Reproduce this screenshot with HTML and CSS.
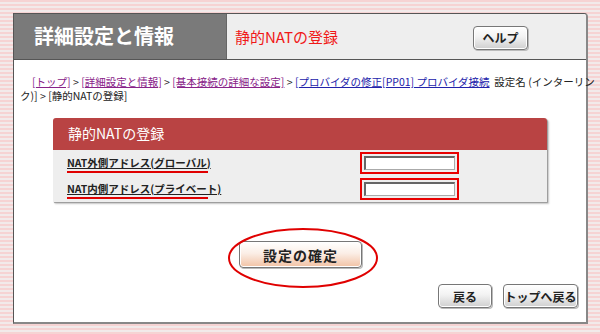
FILE: index.html
```html
<!DOCTYPE html>
<html>
<head lang="ja">
    <meta charset="UTF-8">
    <title>静的NATの登録</title>
    <link rel="stylesheet" href="styles.css">
</head>
<body>
<div class="panel">
    <div class="head">
        <div class="head_title">詳細設定と情報</div>
        <div class="head_sub">静的NATの登録</div>
        <a class="btn btn_help" href="#help">ヘルプ</a>
    </div>
    <div class="crumbs">
        <div class="line first">
            <a class="visited" href="#top">[トップ]</a> &gt;
            <a class="visited" href="#detail">[詳細設定と情報]</a> &gt;
            <a class="visited" href="#basic">[基本接続の詳細な設定]</a> &gt;
            <a href="#pp01">[プロバイダの修正[PP01] プロバイダ接続</a>&nbsp; 設定名 (インターリン
        </div>
        <div class="line">ク)] &gt; [静的NATの登録]</div>
    </div>
    <div class="form_box">
        <div class="form_title">静的NATの登録</div>
        <div class="form_row">
            <span class="label">NAT外側アドレス(グローバル)</span>
            <span class="mark"><input type="text" class="field"></span>
        </div>
        <div class="form_row">
            <span class="label">NAT内側アドレス(プライベート)</span>
            <span class="mark"><input type="text" class="field"></span>
        </div>
    </div>
    <div class="confirm">
        <a class="btn btn_confirm" href="#ok">設定の確定</a>
        <svg class="ring" width="152" height="62" viewBox="0 0 152 62">
            <ellipse cx="76" cy="31" rx="74" ry="29" fill="none" stroke="#e00000" stroke-width="2"/>
        </svg>
    </div>
    <div class="foot">
        <a class="btn btn_back" href="#back">戻る</a>
        <a class="btn btn_top" href="#top">トップへ戻る</a>
    </div>
</div>
</body>
</html>
```

FILE: styles.css
```css
html, body {
    margin: 0;
    padding: 0;
}
body {
    width: 600px;
    height: 334px;
    overflow: hidden;
    background: repeating-linear-gradient(to bottom, #f6d3d3 0px, #f6d3d3 2px, #f2eaea 2px, #f2eaea 4px);
    font-family: "Noto Sans CJK JP", "Noto Sans", sans-serif;
    color: #222;
}
a {
    text-decoration: none;
}
.panel {
    box-sizing: border-box;
    margin: 13px 0 0 13px;
    width: 575px;
    height: 311px;
    background: #fff;
    border: 1px solid #555;
    border-right: 2px solid #888;
    border-bottom: 2px solid #888;
    border-top-right-radius: 4px;
    display: flex;
    flex-direction: column;
}
.head {
    display: flex;
    align-items: center;
    height: 45px;
    background: #eeeeee;
    border-bottom: 1px solid #555;
    border-top-right-radius: 3px;
}
.head_title {
    width: 192px;
    height: 45px;
    line-height: 44px;
    padding-left: 20px;
    background: #7a7a7a;
    border-right: 1px solid #666;
    color: #fff;
    font-size: 20px;
    font-weight: bold;
}
.head_sub {
    padding-left: 8px;
    color: #f01818;
    font-size: 15px;
}
.btn {
    box-sizing: border-box;
    display: flex;
    align-items: center;
    justify-content: center;
    height: 24px;
    border: 1px solid #777;
    border-radius: 4px;
    box-shadow: inset 0 0 0 1px #fff, 1px 1px 0 #bbb;
    background: linear-gradient(to bottom, #ffffff 0%, #f2f2f2 45%, #cfcfcf 100%);
    color: #222;
    font-size: 12px;
    font-weight: bold;
}
.btn_help {
    width: 55px;
    margin-left: auto;
    margin-right: 58px;
    margin-top: 2px;
}
.crumbs {
    padding: 15px 6px 0 6px;
    font-size: 10.5px;
    line-height: 14px;
    color: #222;
}
.crumbs .line {
    white-space: nowrap;
}
.crumbs .first {
    padding-left: 12px;
}
.crumbs a {
    color: #2222aa;
    text-decoration: underline;
}
.crumbs a.visited {
    color: #882288;
}
.form_box {
    margin: 15px auto 0 auto;
    width: 494px;
    background: #eeeeee;
    border-radius: 3px 3px 0 0;
    box-shadow: 1px 1px 1px #999, 2px 2px 2px #ccc;
}
.form_title {
    height: 32px;
    line-height: 31px;
    padding-left: 15px;
    background: #b94343;
    border-radius: 3px 3px 0 0;
    color: #fff;
    font-size: 14px;
}
.form_row {
    display: flex;
    align-items: center;
    height: 26px;
    padding-left: 14px;
}
.label {
    width: 293px;
    font-size: 10.5px;
    font-weight: bold;
    text-decoration: underline;
    line-height: 14px;
    padding-top: 2px;
}
.label::after {
    content: "";
    display: block;
    width: 141px;
    height: 2px;
    background: #e00000;
    margin-top: 1px;
}
.mark {
    box-sizing: border-box;
    width: 99px;
    height: 22px;
    padding: 2px;
    border: 2px solid #e80000;
}
.field {
    box-sizing: border-box;
    display: block;
    width: 91px;
    height: 14px;
    margin: 0;
    padding: 0;
    border: 1px solid #aaa;
    border-top: 2px solid #666;
    border-left: 2px solid #666;
    background: #fff;
}
.confirm {
    position: relative;
    display: flex;
    justify-content: center;
    margin-top: 39px;
}
.btn_confirm {
    width: 123px;
    height: 27px;
    margin-left: 1px;
    font-size: 14px;
    letter-spacing: 1px;
    background: linear-gradient(to bottom, #ffffff 0%, #fbeee6 45%, #f2c2a4 100%);
}
.ring {
    position: absolute;
    left: 213px;
    top: -14px;
}
.foot {
    display: flex;
    justify-content: flex-end;
    gap: 11px;
    margin-top: 16px;
    padding-right: 8px;
}
.btn_back {
    width: 54px;
}
.btn_top {
    width: 75px;
}
```
